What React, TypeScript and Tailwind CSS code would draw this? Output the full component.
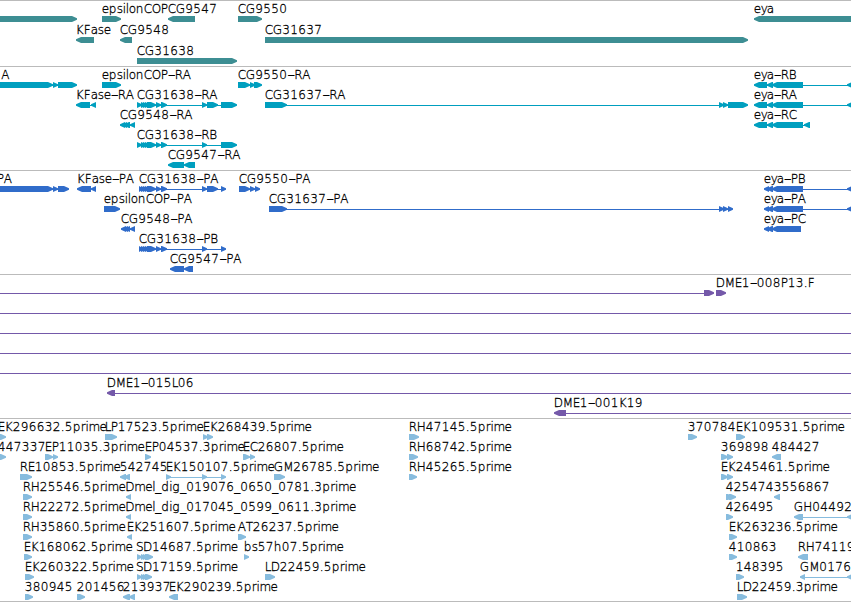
import React from 'react';

type Span = [number, number];

interface Feature {
  name?: string;
  row: number;
  // label start, when it differs from the first span
  at?: number;
  spans: Span[];
  dir?: 'fwd' | 'rev';
  // thin connector behind the spans
  line?: Span;
}

interface Track {
  id: string;
  color: string;
  height: number;
  pitch: number;
  features: Feature[];
}

const WIDTH = 851;

// Label advances in px
const ADVANCE: Record<string, number> = {
  A: 8, B: 8, C: 8, D: 9, E: 7, F: 7, G: 9.6, H: 9, K: 8, L: 6, M: 10, O: 9, P: 7, R: 8, S: 7, T: 7,
  a: 7, b: 8, d: 8, e: 7, g: 8, h: 8, i: 3, l: 3, m: 11, n: 8, o: 7, p: 8, r: 4.7, s: 6, y: 6,
  '.': 4, '-': 7, _: 6,
};

const cg31638Start: Span[] = [[141, 146], [143, 148], [145, 150], [147, 156], [156, 161], [161, 167]];
const eyaExons: Span[] = [[767, 773], [772, 803]];

const tracks: Track[] = [
  {
    id: 'gene',
    color: '#3d8e93',
    height: 66,
    pitch: 21,
    features: [
      { row: 0, spans: [[-10, 77]] },
      { name: 'epsilonCOP', row: 0, spans: [[102, 121]] },
      { name: 'CG9547', row: 0, spans: [[168, 195]], dir: 'rev' },
      { name: 'CG9550', row: 0, spans: [[238, 262]] },
      { name: 'eya', row: 0, spans: [[754, 870]], dir: 'rev' },
      { name: 'KFase', row: 1, spans: [[76, 94]], dir: 'rev' },
      { name: 'CG9548', row: 1, spans: [[120, 132]], dir: 'rev' },
      { name: 'CG31637', row: 1, spans: [[265, 748]] },
      { name: 'CG31638', row: 2, spans: [[137, 237]] },
    ],
  },
  {
    id: 'transcript',
    color: '#009fbf',
    height: 104,
    pitch: 20,
    features: [
      { name: 'A', row: 0, at: 1.5, spans: [[-10, 53], [53, 58], [58, 77]], line: [40, 70] },
      { name: 'epsilonCOP-RA', row: 0, spans: [[102, 121]] },
      { name: 'CG9550-RA', row: 0, spans: [[238, 250], [250, 255], [254, 262]], line: [240, 258] },
      { name: 'eya-RB', row: 0, spans: [[754, 767], ...eyaExons, [847, 852]], dir: 'rev', line: [760, 851] },
      { name: 'KFase-RA', row: 1, spans: [[76, 90], [91, 96]], dir: 'rev', line: [85, 94] },
      { name: 'CG31638-RA', row: 1, spans: [[137, 142], ...cg31638Start, [202, 207], [207, 218], [221, 237]], line: [140, 230] },
      { name: 'CG31637-RA', row: 1, spans: [[265, 287], [719, 724], [723, 728], [728, 748]], line: [285, 740] },
      { name: 'eya-RA', row: 1, spans: [[754, 767], ...eyaExons, [847, 852]], dir: 'rev', line: [760, 851] },
      { name: 'CG9548-RA', row: 2, spans: [[120, 125], [122, 127], [124, 130], [130, 135]], dir: 'rev', line: [123, 133] },
      { name: 'eya-RC', row: 2, spans: [[754, 767], ...eyaExons, [804, 810]], dir: 'rev', line: [760, 808] },
      { name: 'CG31638-RB', row: 3, spans: [[137, 142], ...cg31638Start, [202, 207], [221, 237]], line: [140, 230] },
      { name: 'CG9547-RA', row: 4, spans: [[168, 184], [184, 195]], dir: 'rev' },
    ],
  },
  {
    id: 'protein',
    color: '#306cca',
    height: 104,
    pitch: 20,
    features: [
      { name: 'PA', row: 0, at: -3, spans: [[-10, 53], [53, 58], [58, 69]], line: [40, 66] },
      { name: 'KFase-PA', row: 0, spans: [[77, 91], [91, 96]], dir: 'rev' },
      { name: 'CG31638-PA', row: 0, spans: [[139, 143], ...cg31638Start, [202, 207], [207, 218], [221, 226]], line: [140, 224] },
      { name: 'CG9550-PA', row: 0, spans: [[239, 250], [250, 255], [255, 260]], line: [242, 258] },
      { name: 'eya-PB', row: 0, spans: [[764, 769], ...eyaExons, [847, 852]], dir: 'rev', line: [766, 851] },
      { name: 'epsilonCOP-PA', row: 1, spans: [[104, 120]] },
      { name: 'CG31637-PA', row: 1, spans: [[269, 287], [719, 724], [723, 728], [728, 733]], line: [285, 730] },
      { name: 'eya-PA', row: 1, spans: [[764, 769], ...eyaExons, [847, 852]], dir: 'rev', line: [766, 851] },
      { name: 'CG9548-PA', row: 2, spans: [[121, 126], [123, 128], [125, 130], [130, 135]], dir: 'rev', line: [124, 133] },
      { name: 'eya-PC', row: 2, spans: [[764, 769], [767, 773], [772, 801]], dir: 'rev' },
      { name: 'CG31638-PB', row: 3, spans: [[139, 143], ...cg31638Start, [202, 207], [221, 226]], line: [140, 224] },
      { name: 'CG9547-PA', row: 4, spans: [[170, 184], [184, 193]], dir: 'rev' },
    ],
  },
  {
    id: 'clone',
    color: '#7459a9',
    height: 144,
    pitch: 20,
    features: [
      { row: 0, spans: [[704, 714]], line: [0, 706] },
      { name: 'DME1-008P13.F', row: 0, spans: [[716, 726]] },
      { row: 1, spans: [], line: [0, 851] },
      { row: 2, spans: [], line: [0, 851] },
      { row: 3, spans: [], line: [0, 851] },
      { row: 4, spans: [], line: [0, 851] },
      { name: 'DME1-015L06', row: 5, spans: [[107, 115]], dir: 'rev', line: [112, 851] },
      { name: 'DME1-001K19', row: 6, spans: [[554, 566]], dir: 'rev', line: [560, 851] },
    ],
  },
  {
    id: 'est',
    color: '#87bcde',
    height: 183,
    pitch: 20,
    features: [
      { name: 'EK296632.5prime', row: 0, at: -2, spans: [[-6, 6]] },
      { name: 'LP17523.5prime', row: 0, spans: [[105, 117]] },
      { name: 'EK268439.5prime', row: 0, spans: [[203, 208], [207, 213]] },
      { name: 'RH47145.5prime', row: 0, spans: [[409, 419]] },
      { name: '370784', row: 0, spans: [[688, 697]] },
      { name: 'EK109531.5prime', row: 0, spans: [[736, 745]] },
      { name: '447337', row: 1, at: -2, spans: [[-6, 6]] },
      { name: 'EP11035.3prime', row: 1, spans: [[45, 53], [53, 58]], line: [48, 56] },
      { name: 'EP04537.3prime', row: 1, spans: [[145, 151]] },
      { name: 'EC26807.5prime', row: 1, spans: [[243, 250], [250, 255]], line: [246, 253] },
      { name: 'RH68742.5prime', row: 1, spans: [[409, 418]] },
      { name: '369898', row: 1, spans: [[721, 728], [727, 733]] },
      { name: '484427', row: 1, spans: [[772, 781]], dir: 'rev' },
      { name: 'RE10853.5prime', row: 2, spans: [[20, 32]] },
      { name: '542745', row: 2, spans: [[120, 126], [124, 130]], dir: 'rev' },
      { name: 'EK150107.5prime', row: 2, spans: [[166, 171], [202, 207], [221, 226]], line: [168, 224] },
      { name: 'GM26785.5prime', row: 2, spans: [[274, 285]] },
      { name: 'RH45265.5prime', row: 2, spans: [[409, 417]] },
      { name: 'EK245461.5prime', row: 2, spans: [[721, 728], [727, 733]] },
      { name: 'RH25546.5prime', row: 3, spans: [[23, 32]] },
      { name: 'Dmel_dig_019076_0650_0781.3prime', row: 3, at: 125.5, spans: [[126, 131]], dir: 'rev' },
      { name: '425474', row: 3, spans: [[726, 733], [729, 736]] },
      { name: '3556867', row: 3, spans: [[774, 780]], dir: 'rev' },
      { name: 'RH22272.5prime', row: 4, spans: [[23, 32]] },
      { name: 'Dmel_dig_017045_0599_0611.3prime', row: 4, at: 125.5, spans: [[126, 131]], dir: 'rev' },
      { name: '426495', row: 4, spans: [[726, 733]] },
      { name: 'GH04492', row: 4, spans: [[794, 803], [847, 852]], dir: 'rev', line: [800, 851] },
      { name: 'RH35860.5prime', row: 5, spans: [[23, 32]] },
      { name: 'EK251607.5prime', row: 5, spans: [[127, 132]], dir: 'rev' },
      { name: 'AT26237.5prime', row: 5, spans: [[238, 246]] },
      { name: 'EK263236.5prime', row: 5, spans: [[729, 737]] },
      { name: 'EK168062.5prime', row: 6, spans: [[24, 32]] },
      { name: 'SD14687.5prime', row: 6, at: 136.3, spans: [[137, 142], [141, 146], [143, 148], [145, 153]] },
      { name: 'bs57h07.5prime', row: 6, spans: [[244, 249]] },
      { name: '410863', row: 6, spans: [[729, 737]] },
      { name: 'RH74119', row: 6, spans: [[798, 808]], dir: 'rev' },
      { name: 'EK260322.5prime', row: 7, spans: [[25, 34]] },
      { name: 'SD17159.5prime', row: 7, at: 136.3, spans: [[137, 142], [141, 146], [143, 148], [145, 152]] },
      { name: 'LD22459.5prime', row: 7, spans: [[265, 275]] },
      { name: '148395', row: 7, spans: [[736, 744]] },
      { name: 'GM0176', row: 7, spans: [[800, 805], [847, 852]], dir: 'rev', line: [802, 851] },
      { name: '380945', row: 8, spans: [[25, 33]] },
      { name: '201456', row: 8, spans: [[77, 85]] },
      { name: '213937', row: 8, spans: [[123, 130], [129, 135]], dir: 'rev' },
      { name: 'EK290239.5prime', row: 8, spans: [[169, 178]], dir: 'rev' },
      { name: 'LD22459.3prime', row: 8, spans: [[737, 747]] },
    ],
  },
];

const Label: React.FC<{ name: string; x: number; y: number }> = ({ name, x, y }) => {
  let pen = x - 0.3;
  const parts = name.split(/(-)/).map(part => {
    const xs = part.split('').map(ch => {
      const pos = pen;
      pen += ADVANCE[ch] ?? 8;
      return pos.toFixed(1);
    });
    return { part, xs };
  });

  return (
    <text y={y} fill="#000" stroke="#000" strokeWidth={0.3} className="font-extralight">
      {parts.map(({ part, xs }, i) =>
        part === '-' ? (
          // hyphens are stretched over their whole cell
          <tspan key={i} x={xs[0]} textLength={8} lengthAdjust="spacingAndGlyphs">-</tspan>
        ) : (
          <tspan key={i} x={xs.join(' ')}>{part}</tspan>
        )
      )}
    </text>
  );
};

const arrowPoints = ([from, to]: Span, y: number, dir: Feature['dir']) => {
  const tip = Math.min(5, to - from);
  const shape = (end: number, shoulder: number, back: number) =>
    `${back},${y} ${shoulder},${y} ${end},${y + 2.3} ${end},${y + 3.7} ${shoulder},${y + 6} ${back},${y + 6}`;
  return dir === 'rev' ? shape(from, from + tip, to) : shape(to, to - tip, from);
};

const FeatureGlyph: React.FC<{ feature: Feature; pitch: number; color: string }> = ({ feature, pitch, color }) => {
  const { name, row, at, spans, dir, line } = feature;
  const top = row * pitch + 15;

  return (
    <g>
      {line && <rect x={line[0]} y={top + 3} width={line[1] - line[0]} height={1} fill={color} />}
      {spans.map((span, i) => (
        <polygon key={i} points={arrowPoints(span, top, dir)} fill={color} />
      ))}
      {name && <Label name={name} x={at ?? spans[0][0]} y={top - 3} />}
    </g>
  );
};

const TrackPanel: React.FC<{ track: Track }> = ({ track }) => (
  <section className="border-t border-[#bbbbbb]">
    <svg
      width={WIDTH}
      height={track.height - 1}
      className="block overflow-hidden font-['DejaVu_Sans',sans-serif] text-[12px]"
    >
      {track.features.map((feature, i) => (
        <FeatureGlyph key={i} feature={feature} pitch={track.pitch} color={track.color} />
      ))}
    </svg>
  </section>
);

export default function App() {
  return (
    <main className="flex h-[602px] w-[851px] flex-col overflow-hidden border-b border-[#bbbbbb] bg-white">
      {tracks.map(track => (
        <TrackPanel key={track.id} track={track} />
      ))}
    </main>
  );
}
